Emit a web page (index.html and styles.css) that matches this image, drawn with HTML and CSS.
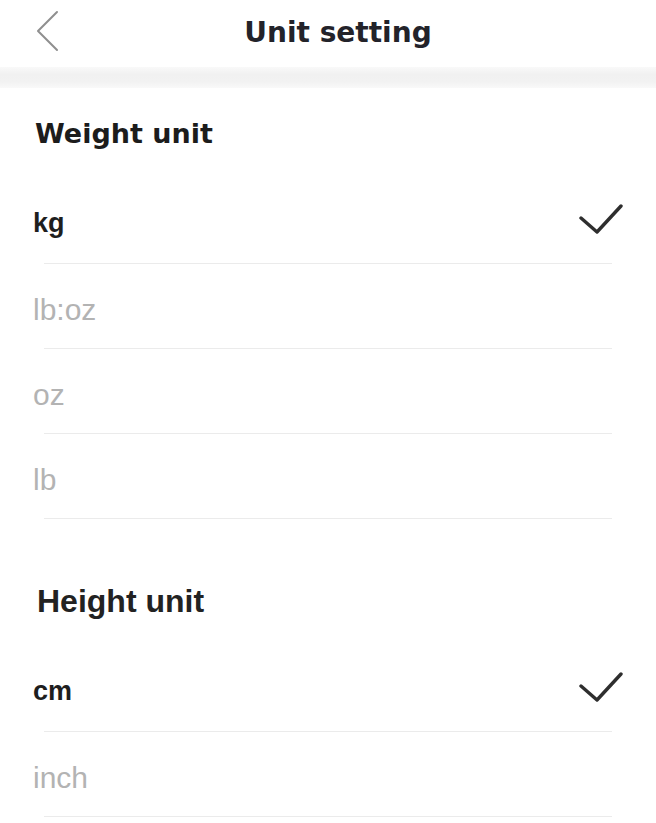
FILE: index.html
```html
<!DOCTYPE html>
<html lang="en">
<head>
<meta charset="utf-8">
<title>Unit setting</title>
<link rel="stylesheet" href="styles.css">
</head>
<body>
<div class="page">
  <header class="topbar">
    <div class="back">
      <svg class="back-icon" width="24" height="42" viewBox="0 0 24 42" aria-hidden="true">
        <polyline points="21,2 2,21 21,40" fill="none" stroke="#8f8f8f" stroke-width="2" stroke-linecap="round" stroke-linejoin="round"/>
      </svg>
    </div>
    <h1 class="title">Unit setting</h1>
    <div class="spacer"></div>
  </header>
  <div class="band"></div>

  <section class="section">
    <h2 class="section-title weight">Weight unit</h2>
    <div class="row selected"><span class="label">kg</span>
      <svg class="check" width="44" height="32" viewBox="0 0 44 32" aria-hidden="true"><polyline points="2,14 18,28 42,2" fill="none" stroke="#2e2e2e" stroke-width="3.4" stroke-linecap="round" stroke-linejoin="round"/></svg>
    </div>
    <div class="row"><span class="label">lb:oz</span></div>
    <div class="row"><span class="label">oz</span></div>
    <div class="row"><span class="label">lb</span></div>
  </section>

  <section class="section">
    <h2 class="section-title height">Height unit</h2>
    <div class="row selected"><span class="label">cm</span>
      <svg class="check" width="44" height="32" viewBox="0 0 44 32" aria-hidden="true"><polyline points="2,14 18,28 42,2" fill="none" stroke="#2e2e2e" stroke-width="3.4" stroke-linecap="round" stroke-linejoin="round"/></svg>
    </div>
    <div class="row"><span class="label">inch</span></div>
  </section>
</div>
</body>
</html>
```

FILE: styles.css
```css
html, body {
  margin: 0;
  padding: 0;
  background: #ffffff;
}

.page {
  width: 656px;
  min-height: 823px;
  background: #ffffff;
  font-family: "Liberation Sans", Arial, sans-serif;
}

.topbar {
  height: 67px;
  display: grid;
  grid-template-columns: 76px 1fr 56px;
  align-items: center;
}

.back {
  display: flex;
  align-items: center;
  padding-left: 36px;
  padding-bottom: 5px;
}

.back-icon {
  display: block;
}

.title {
  margin: 0;
  text-align: center;
  font-family: "DejaVu Sans", sans-serif;
  font-weight: 700;
  font-size: 28px;
  color: #23232a;
  padding-bottom: 2px;
}

.band {
  height: 21px;
  background: linear-gradient(to bottom, #f9f9f9 0%, #f1f1f1 35%, #f2f2f2 70%, #f9f9f9 100%);
}

.section + .section {
  margin-top: 37px;
}

.section-title {
  margin: 0;
  height: 91px;
  display: flex;
  align-items: center;
  padding-left: 35px;
  color: #1c1c1c;
}

.section-title.weight {
  font-family: "DejaVu Sans", sans-serif;
  font-weight: 700;
  font-size: 27px;
}

.section-title.height {
  font-family: "Liberation Sans", Arial, sans-serif;
  font-weight: 700;
  font-size: 32px;
  padding-left: 37px;
  color: #222222;
}

.row {
  height: 85px;
  box-sizing: border-box;
  padding: 0 33px;
  display: flex;
  align-items: center;
  justify-content: space-between;
  background-image: linear-gradient(#ebebeb, #ebebeb);
  background-repeat: no-repeat;
  background-size: 568px 1px;
  background-position: 44px 84px;
}

.label {
  font-size: 30px;
  color: #b3b3b3;
  padding-top: 6px;
}

.row.selected .label {
  font-size: 27px;
  font-weight: 700;
  color: #1e1e1e;
  padding-top: 4px;
}

.check {
  display: block;
  margin-bottom: 4px;
}
```
